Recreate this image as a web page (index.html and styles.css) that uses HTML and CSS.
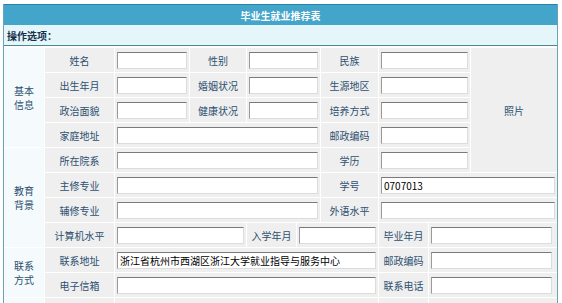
FILE: index.html
```html
<!DOCTYPE html>
<html lang="zh-CN">
<head>
    <meta charset="UTF-8">
    <title>毕业生就业推荐表</title>
    <link rel="stylesheet" href="styles.css">
</head>
<body>
    <div class="sheet">
        <div class="title">毕业生就业推荐表</div>
        <div class="ops">操作选项：</div>
        <div class="grid">
            <div class="cat cat-basic">基本<br>信息</div>
            <div class="cat cat-edu">教育<br>背景</div>
            <div class="cat cat-contact">联系<br>方式</div>
            <div class="cat cat-more"></div>
            <div class="photo">照片</div>

            <div class="lbl">姓名</div>
            <div class="fld"><input class="box" type="text"></div>
            <div class="lbl">性别</div>
            <div class="fld span-2"><input class="box" type="text"></div>
            <div class="lbl">民族</div>
            <div class="fld span-2"><input class="box" type="text"></div>

            <div class="lbl">出生年月</div>
            <div class="fld"><input class="box" type="text"></div>
            <div class="lbl">婚姻状况</div>
            <div class="fld span-2"><input class="box" type="text"></div>
            <div class="lbl">生源地区</div>
            <div class="fld span-2"><input class="box" type="text"></div>

            <div class="lbl">政治面貌</div>
            <div class="fld"><input class="box" type="text"></div>
            <div class="lbl">健康状况</div>
            <div class="fld span-2"><input class="box" type="text"></div>
            <div class="lbl">培养方式</div>
            <div class="fld span-2"><input class="box" type="text"></div>

            <div class="lbl">家庭地址</div>
            <div class="fld span-4"><input class="box" type="text"></div>
            <div class="lbl">邮政编码</div>
            <div class="fld span-2"><input class="box" type="text"></div>

            <div class="lbl">所在院系</div>
            <div class="fld span-4"><input class="box" type="text"></div>
            <div class="lbl">学历</div>
            <div class="fld span-2"><input class="box" type="text"></div>

            <div class="lbl">主修专业</div>
            <div class="fld span-4"><input class="box" type="text"></div>
            <div class="lbl">学号</div>
            <div class="fld span-3"><input class="box" type="text" value="0707013"></div>

            <div class="lbl">辅修专业</div>
            <div class="fld span-4"><input class="box" type="text"></div>
            <div class="lbl">外语水平</div>
            <div class="fld span-3"><input class="box" type="text"></div>

            <div class="lbl">计算机水平</div>
            <div class="fld span-2"><input class="box" type="text"></div>
            <div class="lbl">入学年月</div>
            <div class="fld span-2"><input class="box" type="text"></div>
            <div class="lbl">毕业年月</div>
            <div class="fld fld-end span-2"><input class="box" type="text"></div>

            <div class="lbl">联系地址</div>
            <div class="fld span-5"><input class="box" type="text" value="浙江省杭州市西湖区浙江大学就业指导与服务中心"></div>
            <div class="lbl">邮政编码</div>
            <div class="fld fld-end span-2"><input class="box" type="text"></div>

            <div class="lbl">电子信箱</div>
            <div class="fld span-5"><input class="box" type="text"></div>
            <div class="lbl">联系电话</div>
            <div class="fld fld-end span-2"><input class="box" type="text"></div>

            <div class="lbl"></div>
            <div class="fld span-5"></div>
            <div class="lbl"></div>
            <div class="fld span-2"></div>
        </div>
    </div>
</body>
</html>
```

FILE: styles.css
```css
:root {
    --edge: #6aa2b6;
    --cell: #efefef;
    --label: #2d4f70;
    --font-cjk: "Noto Sans CJK SC", "DejaVu Sans", sans-serif;
}

body {
    margin: 0;
    background: #fff;
    font-family: var(--font-cjk);
    font-size: 10px;
}

.sheet {
    width: 555px;
    margin: 4px 0 0 3px;
    box-sizing: border-box;
    border-left: 1px solid var(--edge);
    border-right: 1px solid var(--edge);
}

.title {
    height: 20px;
    border-top: 1px solid #2682a8;
    background: #43a5ca;
    color: #fff;
    font-weight: bold;
    display: flex;
    align-items: center;
    justify-content: center;
}

.ops {
    height: 20px;
    padding-left: 3px;
    background: #e5f6fb;
    border-bottom: 1px solid #4f8498;
    color: #16304a;
    font-weight: bold;
    display: flex;
    align-items: center;
}

.grid {
    display: grid;
    grid-template-columns: 40px 69px 74px 56px 49px 23px 57px 49px 41px 1fr;
    grid-auto-rows: 24px;
    gap: 1px;
    padding-top: 2px;
    background: #fff;
}

.cat {
    grid-column: 1;
    background: #f5fbfc;
    color: var(--label);
    line-height: 14px;
    display: flex;
    align-items: center;
    justify-content: center;
    text-align: center;
}

.cat-basic { grid-row: 1 / span 4; }
.cat-edu { grid-row: 5 / span 4; }
.cat-contact { grid-row: 9 / span 2; }
.cat-more { grid-row: 11 / span 1; }

.photo {
    grid-column: 10;
    grid-row: 1 / span 5;
    background: var(--cell);
    color: var(--label);
    display: flex;
    align-items: center;
    justify-content: center;
}

.lbl {
    background: var(--cell);
    color: var(--label);
    display: flex;
    align-items: center;
    justify-content: center;
    white-space: nowrap;
}

.fld {
    background: var(--cell);
    padding: 0 2px;
    display: flex;
    align-items: center;
}

.fld-end {
    padding-right: 5px;
}

.span-2 { grid-column: span 2; }
.span-3 { grid-column: span 3; }
.span-4 { grid-column: span 4; }
.span-5 { grid-column: span 5; }

.box {
    width: 100%;
    height: 17px;
    box-sizing: border-box;
    margin: 0;
    padding: 0 2px;
    background: #fff;
    border: 1px solid #dcdcdc;
    border-top-color: #7a7a7a;
    border-left-color: #9a9a9a;
    font-family: var(--font-cjk);
    font-size: 10px;
    color: #000;
}
```
